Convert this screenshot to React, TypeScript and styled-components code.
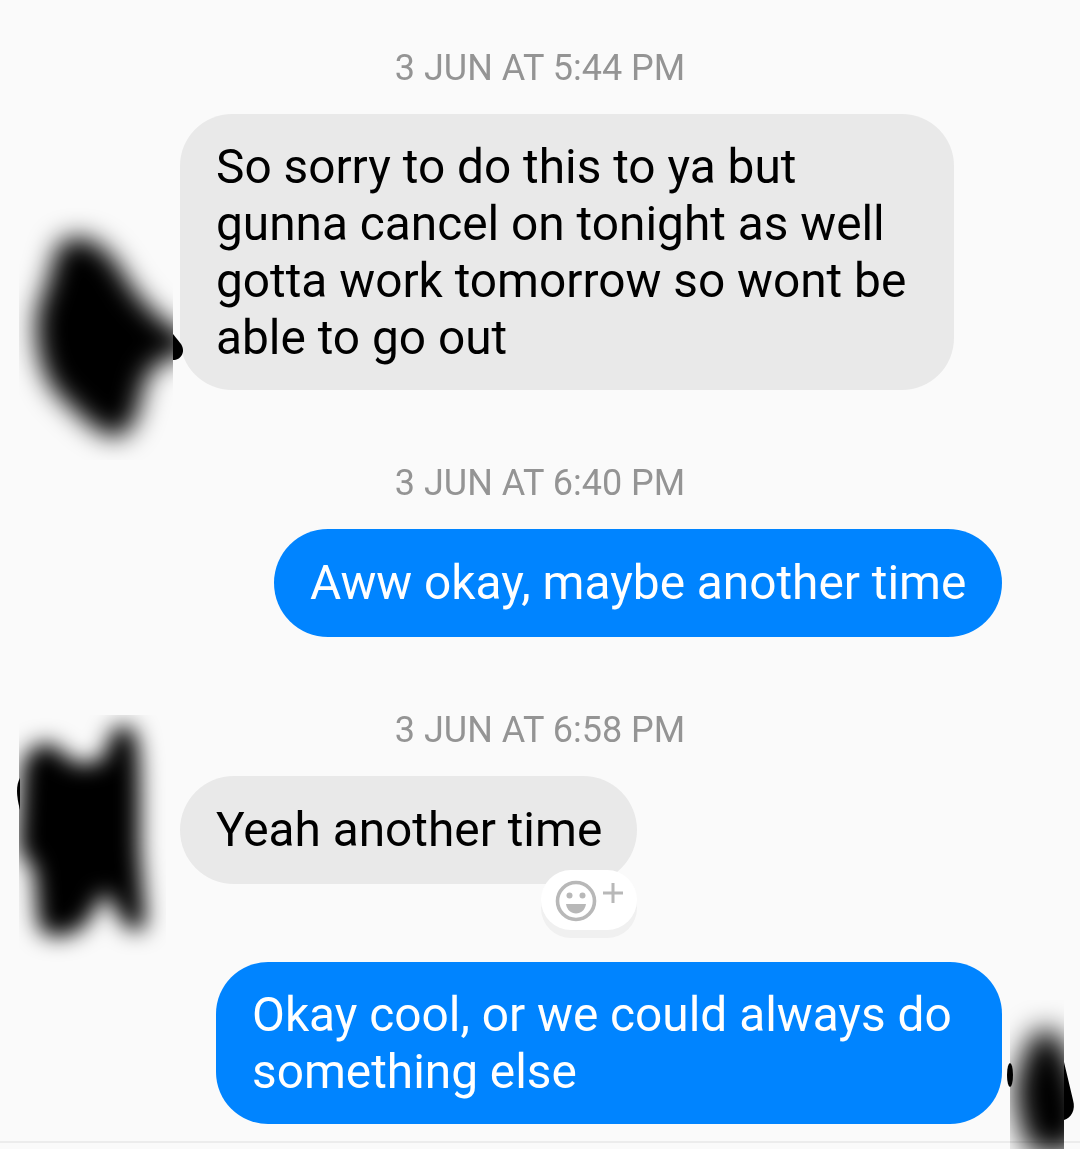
import React from "react";
import styled, { createGlobalStyle } from "styled-components";

const Global = createGlobalStyle`
  html, body { margin: 0; padding: 0; background: #fafafa; }
  body { font-family: Roboto, "Liberation Sans", sans-serif; }
`;

const Screen = styled.main`
  position: relative;
  width: 1080px;
  height: 1149px;
  box-sizing: border-box;
  overflow: hidden;
  background: #fafafa;
  padding-top: 43px;
  display: flex;
  flex-direction: column;
`;

const Stamp = styled.div<{ $after: number }>`
  height: 50px;
  line-height: 50px;
  text-align: center;
  font-size: 36px;
  color: #949494;
  filter: blur(0.4px);
  margin-bottom: ${(p) => p.$after}px;
`;

const Row = styled.div<{ $mine?: boolean; $after: number }>`
  display: flex;
  justify-content: ${(p) => (p.$mine ? "flex-end" : "flex-start")};
  padding: ${(p) => (p.$mine ? "0 78px 0 0" : "0 0 0 180px")};
  margin-bottom: ${(p) => p.$after}px;
`;

const Bubble = styled.div<{ $mine?: boolean; $single?: boolean; $width: number }>`
  position: relative;
  box-sizing: border-box;
  width: ${(p) => p.$width}px;
  padding: ${(p) => (p.$single ? "26px 36px 25px" : "25px 36px 23px")};
  border-radius: ${(p) => (p.$single ? "54px" : "52px")};
  font-size: 47.8px;
  line-height: 57px;
  white-space: nowrap;
  color: ${(p) => (p.$mine ? "#ffffff" : "#000000")};
  background: ${(p) => (p.$mine ? "#0084ff" : "#e9e9e9")};
`;

const BubbleText = styled.span`
  display: block;
  filter: blur(0.4px);
`;

const ReactionPill = styled.div`
  position: absolute;
  right: 0;
  top: 94px;
  width: 96px;
  height: 60px;
  border-radius: 30px;
  background: #ffffff;
  box-shadow: 0 8px 0 #f0f0f0;
  display: flex;
  align-items: center;
  justify-content: center;
`;

const Redaction = styled.svg<{ $x: number; $y: number }>`
  position: absolute;
  left: ${(p) => p.$x}px;
  top: ${(p) => p.$y}px;
  overflow: visible;
`;

const BottomRule = styled.div`
  position: absolute;
  left: 0;
  right: 0;
  bottom: 6px;
  height: 2px;
  background: #ececec;
`;

const ReactionIcon = () => (
  <svg width="76" height="46" viewBox="0 0 76 46" fill="none">
    <circle cx="25" cy="24" r="18.500" stroke="#b8b8b8" strokeWidth="3.600" />
    <circle cx="18.500" cy="18.500" r="3" fill="#b8b8b8" />
    <circle cx="31.500" cy="18.500" r="3" fill="#b8b8b8" />
    <path d="M15 27h20c-1 6-5 9.500-10 9.500S16 33 15 27z" fill="#b8b8b8" />
    <path d="M62 6v20M52 16h20" stroke="#b8b8b8" strokeWidth="3" />
  </svg>
);

export default function App() {
  return (
    <Screen>
      <Global />
      <Stamp $after={21}>3 JUN AT 5:44 PM</Stamp>
      <Row $after={68}>
        <Bubble $width={774}>
          <BubbleText>
            So sorry to do this to ya but<br />
            gunna cancel on tonight as well<br />
            gotta work tomorrow so wont be<br />
            able to go out
          </BubbleText>
        </Bubble>
      </Row>
      <Stamp $after={21}>3 JUN AT 6:40 PM</Stamp>
      <Row $mine $after={68}>
        <Bubble $mine $single $width={728}><BubbleText>Aww okay, maybe another time</BubbleText></Bubble>
      </Row>
      <Stamp $after={21}>3 JUN AT 6:58 PM</Stamp>
      <Row $after={78}>
        <Bubble $single $width={457}>
          <BubbleText>Yeah another time</BubbleText>
          <ReactionPill><ReactionIcon /></ReactionPill>
        </Bubble>
      </Row>
      <Row $mine $after={0}>
        <Bubble $mine $width={786}>
          <BubbleText>
            Okay cool, or we could always do<br />
            something else
          </BubbleText>
        </Bubble>
      </Row>
      <BottomRule />

      <Redaction $x={19} $y={200} width="165" height="260" viewBox="0 0 165 260">
        <defs>
          <filter id="b1" x="-40%" y="-40%" width="180%" height="180%"><feGaussianBlur stdDeviation="13" /></filter>
          <clipPath id="c1"><rect x="0" y="0" width="154" height="260" /></clipPath>
        </defs>
        <path d="M154 134 L162 144 C167 152 162 160 154 160 Z" fill="#000" />
        <g clipPath="url(#c1)">
          <path d="M40 44 C62 26 90 46 106 76 C120 100 144 124 174 138 L174 154 C138 156 126 172 122 198 C118 224 106 240 92 236 C72 230 56 210 38 194 C18 170 14 130 20 104 C30 86 32 62 40 44 Z" fill="#000" filter="url(#b1)" />
        </g>
      </Redaction>

      <Redaction $x={16} $y={715} width="150" height="250" viewBox="0 15 150 250">
        <defs>
          <filter id="b2" x="-30%" y="-30%" width="160%" height="160%"><feGaussianBlur stdDeviation="11" /></filter>
          <clipPath id="c2"><rect x="3" y="15" width="147" height="250" /></clipPath>
        </defs>
        <path d="M4 78 C0 85 0 95 4 110 Z" fill="#000" />
        <g clipPath="url(#c2)">
          <path d="M6 66 C14 40 36 38 46 52 C60 68 78 66 90 54 C92 32 100 24 112 26 C122 30 124 50 124 90 L124 150 L130 222 C126 236 112 232 104 218 L90 192 C82 200 76 218 68 226 C50 240 26 240 22 224 L18 170 L2 150 Z" fill="#000" filter="url(#b2)" />
        </g>
      </Redaction>

      <Redaction $x={1005} $y={1000} width="72" height="149" viewBox="0 0 72 149">
        <defs>
          <filter id="b3" x="-60%" y="-40%" width="220%" height="180%"><feGaussianBlur stdDeviation="14" /></filter>
          <clipPath id="c3"><rect x="5" y="0" width="54" height="149" /></clipPath>
        </defs>
        <ellipse cx="5" cy="75" rx="3" ry="12" fill="#000" />
        <path d="M59 62 L68 100 C71 110 66 118 59 120 Z" fill="#000" />
        <g clipPath="url(#c3)">
          <path d="M22 46 C32 24 50 24 58 44 L70 70 L80 115 L72 152 L24 152 L12 112 L10 82 Z" fill="#000" filter="url(#b3)" />
        </g>
      </Redaction>
    </Screen>
  );
}
